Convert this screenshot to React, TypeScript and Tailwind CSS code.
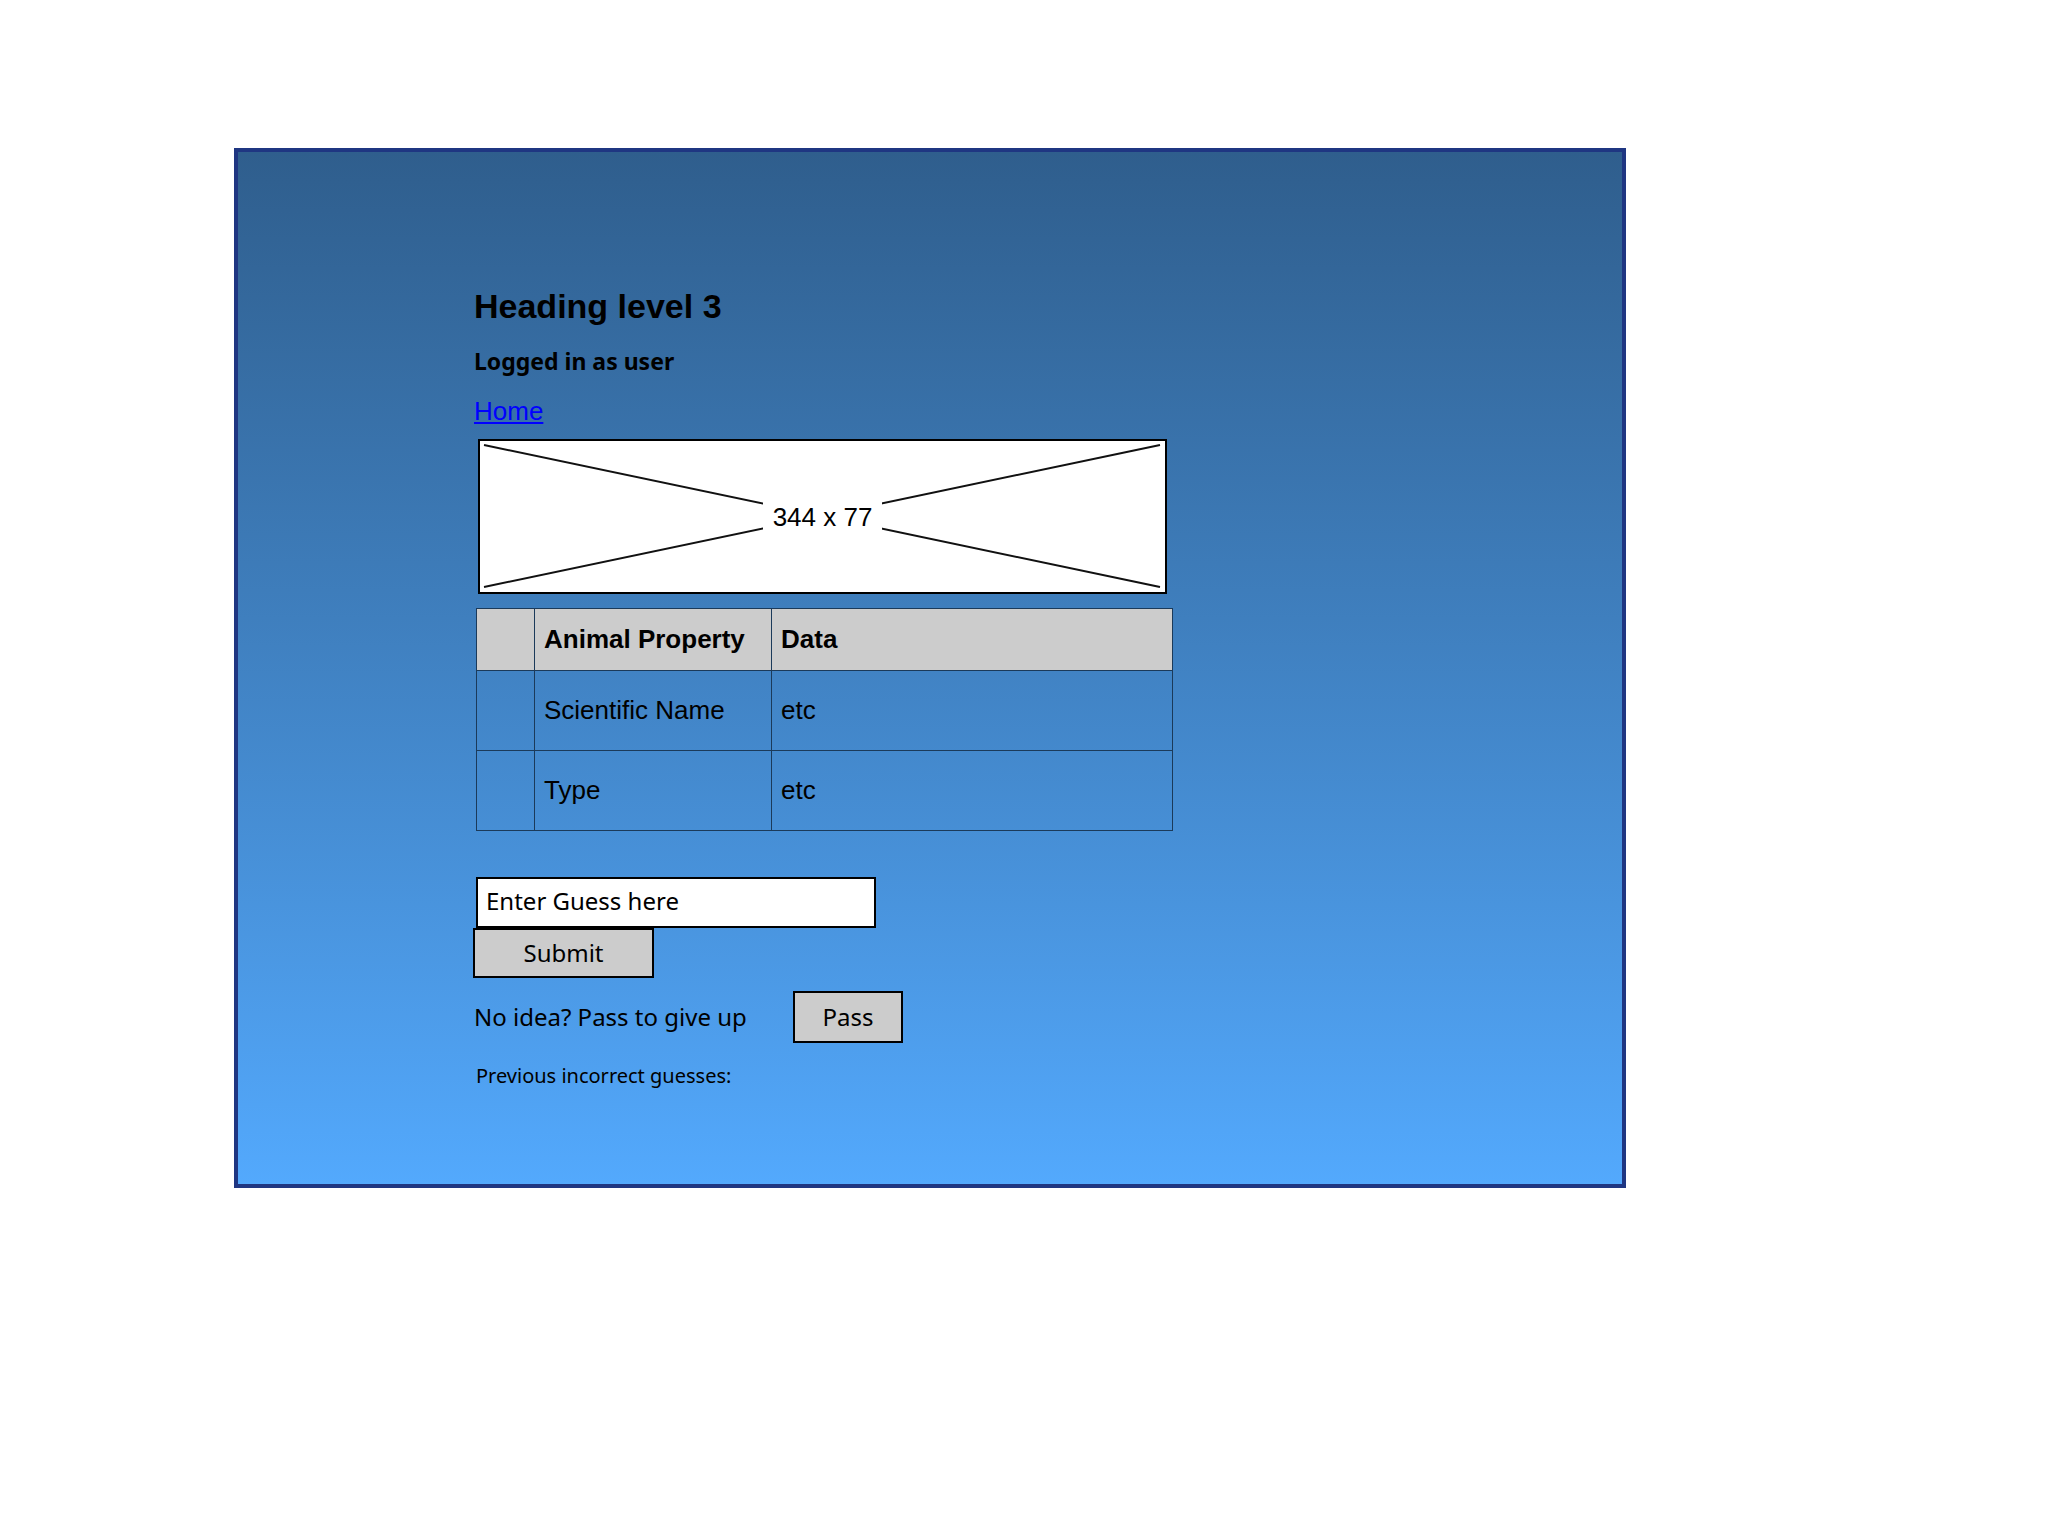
const sketch = '"Noto Sans", "Open Sans", sans-serif';
const arial = '"Liberation Sans", Arial, sans-serif';

const rows = [
  { name: "Scientific Name", data: "etc" },
  { name: "Type", data: "etc" },
];

function ImagePlaceholder() {
  return (
    <div className="relative ml-[4px] h-[155px] w-[689px] border-2 border-black bg-white">
      <svg className="absolute inset-0" width="685" height="151" viewBox="0 0 685 151">
        <line x1="4" y1="4" x2="680" y2="146" stroke="#111" strokeWidth="2" />
        <line x1="680" y1="4" x2="4" y2="146" stroke="#111" strokeWidth="2" />
      </svg>
      <div className="absolute inset-0 flex items-center justify-center">
        <span
          className="bg-white px-[10px] py-[6px] text-[26px] leading-[30px] text-black"
          style={{ fontFamily: arial }}
        >
          344 x 77
        </span>
      </div>
    </div>
  );
}

function PropertyTable() {
  return (
    <table
      className="ml-[2px] mt-[14px] w-[697px] border-collapse text-[26px] leading-[28px] text-black"
      style={{ fontFamily: arial }}
    >
      <thead>
        <tr className="h-[62px] bg-[#cccccc]">
          <th className="w-[58px] border border-[#1b3a5a]" />
          <th className="w-[237px] border border-[#1b3a5a] px-[9px] pb-[2px] text-left font-bold">
            Animal Property
          </th>
          <th className="border border-[#1b3a5a] px-[9px] pb-[2px] text-left font-bold">Data</th>
        </tr>
      </thead>
      <tbody>
        {rows.map((r) => (
          <tr key={r.name} className="h-[80px]">
            <td className="border border-[#1b3a5a]" />
            <td className="border border-[#1b3a5a] px-[9px] pb-[2px]">{r.name}</td>
            <td className="border border-[#1b3a5a] px-[9px] pb-[2px]">{r.data}</td>
          </tr>
        ))}
      </tbody>
    </table>
  );
}

export default function App() {
  return (
    <div className="min-h-[1536px] bg-white pl-[234px] pt-[148px]">
      <div className="h-[1040px] w-[1392px] border-4 border-[#1f3682] bg-linear-to-b from-[#2f5e8d] to-[#53a9fd] pl-[236px] pt-[134px]">
        <h3
          className="text-[34px] font-bold leading-[40px] text-black"
          style={{ fontFamily: arial }}
        >
          Heading level 3
        </h3>
        <p
          className="mt-[20px] text-[23px] font-bold leading-[30px] text-black"
          style={{ fontFamily: sketch }}
        >
          Logged in as user
        </p>
        <a
          href="#"
          className="mt-[20px] block w-fit text-[26px] leading-[30px] text-[#0000ff] underline"
          style={{ fontFamily: arial }}
        >
          Home
        </a>
        <div className="mt-[13px]">
          <ImagePlaceholder />
        </div>
        <PropertyTable />

        <div className="mt-[46px] flex flex-col" style={{ fontFamily: sketch }}>
          <div className="ml-[2px] flex h-[51px] w-[400px] items-center border-2 border-black bg-white px-[8px] pb-[4px] text-[24px] text-black">
            Enter Guess here
          </div>
          <button className="-ml-[1px] flex h-[50px] w-[181px] items-center justify-center border-2 border-black bg-[#cccccc] text-[24px] text-black">
            Submit
          </button>
          <div className="mt-[13px] flex h-[52px] items-center">
            <span className="w-[319px] text-[24px] text-black">No idea? Pass to give up</span>
            <button className="flex h-[52px] w-[110px] items-center justify-center border-2 border-black bg-[#cccccc] text-[24px] text-black">
              Pass
            </button>
          </div>
          <p className="ml-[2px] mt-[20px] text-[20px] leading-[26px] text-black">
            Previous incorrect guesses:
          </p>
        </div>
      </div>
    </div>
  );
}
